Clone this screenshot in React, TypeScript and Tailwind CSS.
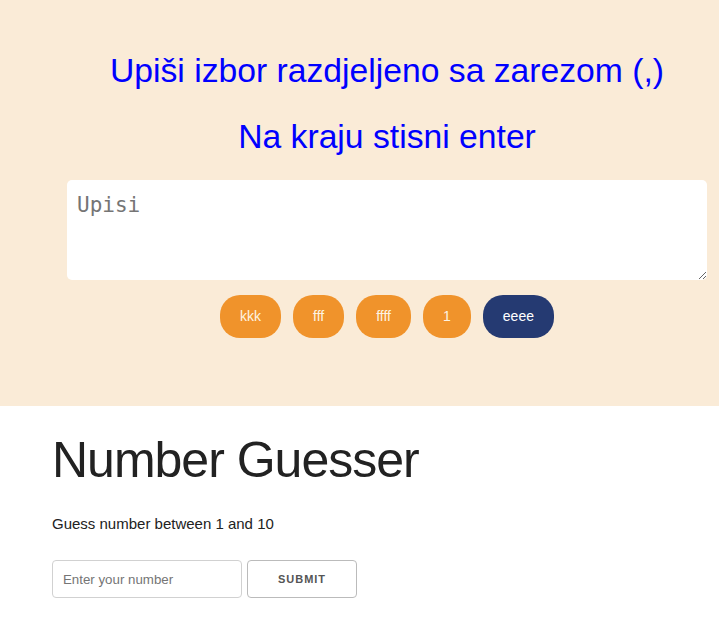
export default function App() {
  const choices = ['kkk', 'fff', 'ffff', '1'];

  return (
    <div className="min-h-screen bg-white font-['Liberation_Sans',Arial,sans-serif]">
      {/* Picker */}
      <section className="h-[406px] bg-[#faebd7] pt-[50px]">
        <div className="ml-[67px] w-[640px] flex flex-col items-center">
          <h2 className="text-[33.7px] leading-[40px] text-[#0000ff] whitespace-nowrap">
            Upiši izbor razdjeljeno sa zarezom (,)
          </h2>
          <h2 className="mt-[26px] text-[33.7px] leading-[40px] text-[#0000ff] whitespace-nowrap">
            Na kraju stisni enter
          </h2>
          <textarea
            placeholder="Upisi"
            className="mt-[24px] block h-[100px] w-[640px] rounded-[5px] bg-white px-[10px] pt-[12px] pb-[8px] font-['DejaVu_Sans_Mono',monospace] text-[21px] leading-[26px] text-[#333] placeholder:text-[#757575] outline-none"
          />
          <div className="mt-[15px] flex gap-[12px]">
            {choices.map((c) => (
              <span
                key={c}
                className="flex h-[43px] items-center rounded-[20px] bg-[#f0932b] px-5 text-[14px] text-[#fdf3e3]"
              >
                {c}
              </span>
            ))}
            <span className="flex h-[43px] items-center rounded-[20px] bg-[#253a72] px-5 text-[14px] text-white">
              eeee
            </span>
          </div>
        </div>
      </section>

      {/* Number guesser */}
      <section className="pl-[52px] pt-[24px] text-[#222]">
        <h1 className="text-[50px] leading-[60px] tracking-[-1px]">Number Guesser</h1>
        <p className="mt-[22px] text-[15px] leading-[24px]">Guess number between 1 and 10</p>
        <div className="mt-[24px] flex gap-[5px]">
          <input
            type="number"
            placeholder="Enter your number"
            className="h-[38px] w-[190px] rounded-[4px] border border-[#d1d1d1] bg-white px-[10px] text-[13.3px] placeholder:text-[#757575] outline-none"
          />
          <button className="h-[38px] w-[110px] rounded-[4px] border border-[#bbb] bg-transparent text-[11px] font-bold uppercase tracking-[1px] text-[#555]">
            Submit
          </button>
        </div>
      </section>
    </div>
  );
}
